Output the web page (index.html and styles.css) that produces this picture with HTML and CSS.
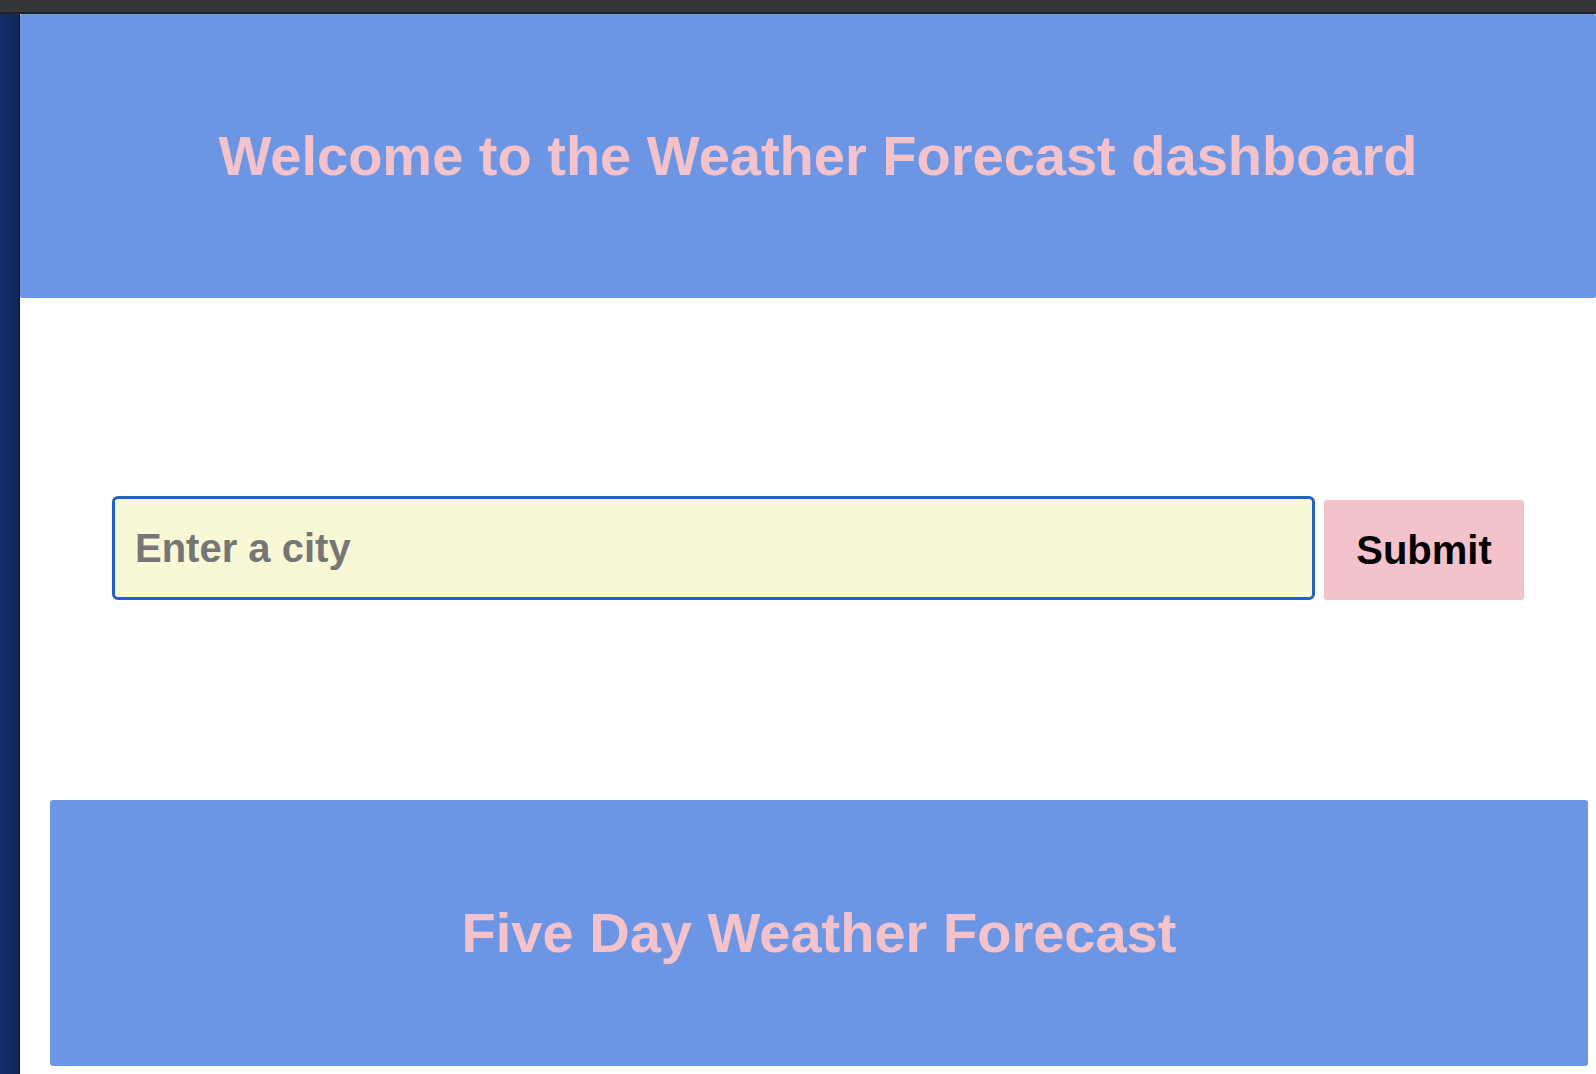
FILE: index.html
```html
<!DOCTYPE html>
<html lang="en">
<head>
<meta charset="utf-8">
<title>Weather Forecast Dashboard</title>
<link rel="stylesheet" href="styles.css">
</head>
<body>
  <div class="topbar"></div>
  <div class="layout">
    <div class="sidebar"></div>
    <main class="page">
      <header class="hero">
        <h1 class="hero-title">Welcome to the Weather Forecast dashboard</h1>
      </header>
      <form class="search" onsubmit="return false">
        <input class="search-input" type="text" placeholder="Enter a city">
        <button class="search-button" type="submit">Submit</button>
      </form>
      <section class="forecast">
        <h2 class="forecast-title">Five Day Weather Forecast</h2>
      </section>
    </main>
  </div>
</body>
</html>
```

FILE: styles.css
```css
html, body {
  margin: 0;
  padding: 0;
  height: 100%;
  overflow: hidden;
}

body {
  background: #ffffff;
  font-family: "Liberation Sans", Arial, Helvetica, sans-serif;
  display: flex;
  flex-direction: column;
}

.topbar {
  height: 12px;
  background: #35363a;
  border-bottom: 2px solid #202124;
  flex: none;
}

.layout {
  flex: 1;
  display: flex;
  min-height: 0;
}

.sidebar {
  width: 19px;
  flex: none;
  background: linear-gradient(90deg, #13306a 0%, #0f2755 100%);
  border-right: 1px solid #0a1428;
}

.page {
  flex: 1;
  display: flex;
  flex-direction: column;
  background: #ffffff;
}

.hero {
  height: 284px;
  background: #6c96e4;
  border-radius: 2px;
  display: flex;
  align-items: center;
  justify-content: center;
  padding-left: 20px;
  flex: none;
}

.hero-title,
.forecast-title {
  margin: 0;
  color: #f4c2cb;
  font-size: 56px;
  font-weight: 700;
  line-height: 1;
}

.search {
  margin: 198px 72px 0 92px;
  display: flex;
  align-items: flex-end;
  gap: 9px;
}

.search-input {
  flex: 1;
  height: 104px;
  box-sizing: border-box;
  border: 3px solid #2562c6;
  border-radius: 6px;
  background: #f8f8d6;
  padding: 0 0 0 20px;
  font-family: inherit;
  font-size: 40px;
  font-weight: 700;
  color: #222;
  outline: none;
}

.search-input::placeholder {
  color: #767676;
  opacity: 1;
}

.search-button {
  width: 200px;
  height: 100px;
  border: none;
  border-radius: 3px;
  background: #f4c2cb;
  color: #000;
  font-family: inherit;
  font-size: 40px;
  font-weight: 700;
  cursor: pointer;
}

.forecast {
  margin: 200px 8px 0 30px;
  height: 266px;
  background: #6c96e4;
  border-radius: 3px;
  display: flex;
  align-items: center;
  justify-content: center;
  flex: none;
}
```
